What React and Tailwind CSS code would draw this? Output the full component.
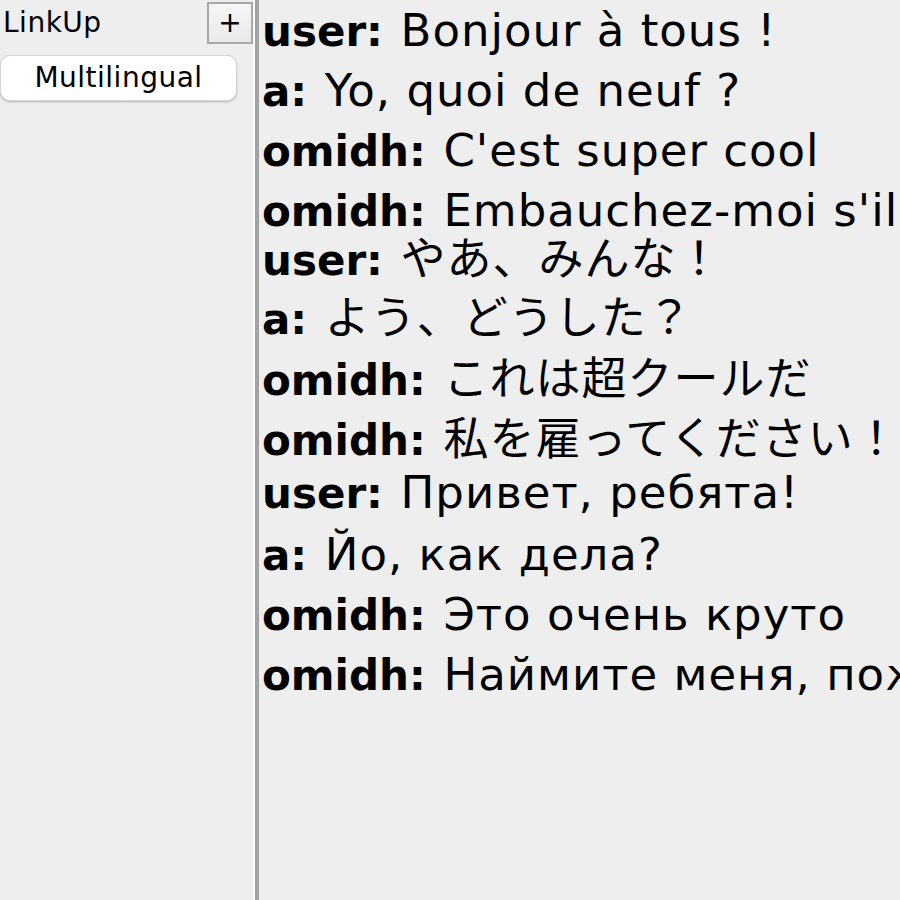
import React from 'react';

const messages = [
  { user: 'user', text: 'Bonjour à tous !', h: 60 },
  { user: 'a', text: 'Yo, quoi de neuf ?', h: 60 },
  { user: 'omidh', text: "C'est super cool", h: 60 },
  { user: 'omidh', text: "Embauchez-moi s'il vous plaît !", h: 49 },
  { user: 'user', text: 'やあ、みんな！', h: 59 },
  { user: 'a', text: 'よう、どうした？', h: 61 },
  { user: 'omidh', text: 'これは超クールだ', h: 60 },
  { user: 'omidh', text: '私を雇ってください！', h: 53 },
  { user: 'user', text: 'Привет, ребята!', h: 62 },
  { user: 'a', text: 'Йо, как дела?', h: 60 },
  { user: 'omidh', text: 'Это очень круто', h: 60 },
  { user: 'omidh', text: 'Наймите меня, пожалуйста!', h: 60 },
];

const font = { fontFamily: '"DejaVu Sans", "Noto Sans CJK JP", sans-serif' };

export default function App() {
  return (
    <div className="flex h-[900px] w-[900px] overflow-hidden bg-[#eeeeee] text-black" style={font}>
      {/* sidebar */}
      <div className="flex w-[253px] shrink-0 flex-col">
        <div className="flex h-[46px] items-start justify-between pt-[2px]">
          <span className="pl-[3px] pt-[6px] text-[28px] leading-[30px] tracking-[0.5px]">LinkUp</span>
          <button className="flex h-[42px] w-[46px] items-center justify-center border-2 border-[#a8a8a8] bg-gradient-to-b from-[#f6f6f6] to-[#e9e9e9] text-[28px] leading-none">
            +
          </button>
        </div>
        <div className="mt-[9px] mr-[16px] flex h-[46px] items-center justify-center rounded-[10px] border border-[#d6d6d6] bg-white text-[28px] tracking-[0.5px] shadow-[0_1px_2px_rgba(0,0,0,0.25)]">
          Multilingual
        </div>
      </div>

      {/* divider */}
      <div className="w-[2px] shrink-0 bg-[#fafafa]" />
      <div className="w-[4px] shrink-0 bg-[#a3a3a3]" />

      {/* chat */}
      <div className="flex min-w-0 flex-1 flex-col overflow-hidden pl-[3px]">
        {messages.map((m, i) => (
          <div key={i} className="whitespace-nowrap text-[42px] leading-[62px]" style={{ height: m.h }}>
            <span className="font-bold">{m.user}: </span>
            <span className="ml-[3px] text-[45px] tracking-[1px]">{m.text}</span>
          </div>
        ))}
      </div>
    </div>
  );
}
